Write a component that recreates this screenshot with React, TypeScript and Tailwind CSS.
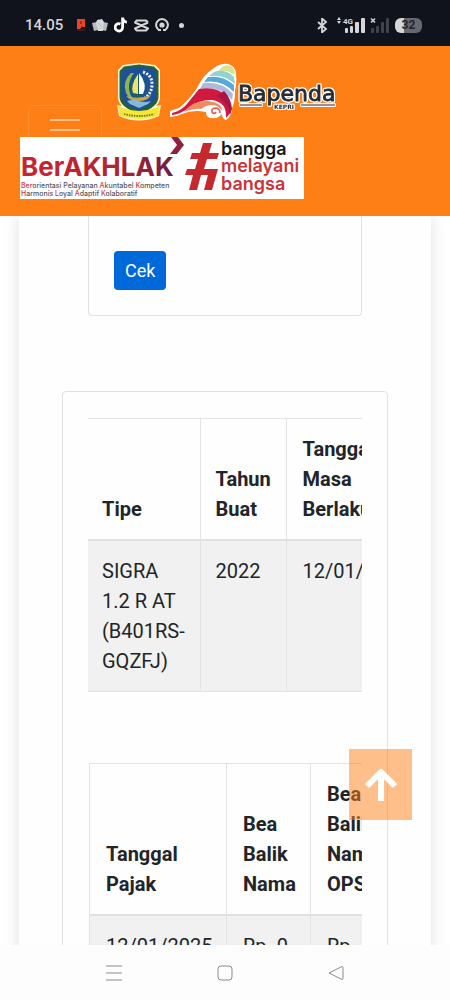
import React from "react";

const vehicle = { tipe: "SIGRA 1.2 R AT (B401RS-GQZFJ)", tahun: "2022", berlaku: "12/01/2027" };

const taxes = [{ tanggal: "12/01/2025", bbn: "Rp. 0", opsen: "Rp. 0" }];

function StatusBar() {
  return (
    <div className="flex h-[46px] shrink-0 items-center justify-between bg-[#11131c] pt-1 pr-7 pl-[25px] text-[#d5d6da]">
      <div className="flex items-center gap-[6px]">
        <span className="mr-[7px] text-[15px] font-medium">14.05</span>
        <svg width="10" height="14" viewBox="0 0 10 14">
          <path d="M1 1h8v8H6l-2 2H1z" fill="#e8432b" />
          <path d="M4 3h2v3H4zM5 8h2v1H5z" fill="#a52c1d" />
          <path d="M1 12h8" stroke="#7c2017" />
        </svg>
        <svg width="16" height="14" viewBox="0 0 16 14">
          <path d="M0 5l5-1 1 8-4 1zM16 5l-5-1-1 8 4 1z" fill="#b9babf" />
          <path d="M5 2l5-1 2 3-1 9H6L4 5z" fill="#d5d6da" />
          <path d="M6 5l4 4" stroke="#b9babf" />
        </svg>
        <svg width="14" height="16" viewBox="0 0 13 15" fill="none" stroke="#fff" strokeWidth="2.6">
          <path d="M6 6.500a3.500 3.500 0 1 0 2 3.500V0.500c.2 2.500 1.800 4 4 4.200" />
        </svg>
        <svg width="15" height="13" viewBox="0 0 15 13" fill="none" stroke="#d5d6da" strokeWidth="2">
          <path d="M14 3.500L12 1.500H2.500L1 3.500l13 6-2 2H2.500L1 9.500l13-6" strokeLinejoin="round" />
        </svg>
        <svg width="14" height="14" viewBox="0 0 14 14" fill="none" stroke="#d5d6da" strokeWidth="2">
          <path d="M4.500 12.300a5.900 5.900 0 1 1 5 0" />
          <circle cx="7" cy="7" r="1.600" fill="#d5d6da" />
          <path d="M3 12h3M8 12h3" />
        </svg>
        <span className="ml-1 size-[5px] rounded-full bg-[#d5d6da]" />
      </div>
      <div className="flex items-center gap-[5px]">
        <svg width="11" height="15" viewBox="0 0 11 15" fill="none" stroke="#d5d6da" strokeWidth="1.800">
          <path d="M1 4l8 7-4 3.500V.5L9 4l-8 7" />
        </svg>
        <svg className="ml-1" width="28" height="16" viewBox="0 0 28 16" fill="#d5d6da">
          <path d="M0 3l2-3 2 3zM0 4h4L2 7z" />
          <text x="6" y="7" fontSize="8" fontWeight="700">4G</text>
          <rect x="8" y="11" width="3" height="5" rx="1" />
          <rect x="13" y="9" width="3" height="7" rx="1" />
          <rect x="18" y="5" width="4" height="11" rx="1" />
          <rect x="24" y="1" width="4" height="15" rx="1" />
        </svg>
        <svg width="20" height="16" viewBox="0 0 20 16" fill="#41434b">
          <path d="M1 1.500l4 4M5 1.500l-4 4" stroke="#d5d6da" strokeWidth="1.500" />
          <rect x="1" y="11" width="3" height="5" rx="1" />
          <rect x="6" y="9" width="3" height="7" rx="1" />
          <rect x="11" y="5" width="3" height="11" rx="1" />
          <rect x="16" y="1" width="3" height="15" rx="1" />
        </svg>
        <div className="flex h-[15px] w-[27px] items-center justify-center rounded-md bg-linear-to-r from-[#d5d6da] from-35% to-[#67686f] to-35% text-xs font-bold text-[#24262e]">
          32
        </div>
      </div>
    </div>
  );
}

function Emblem() {
  return (
    <svg width="46" height="58" viewBox="0 0 46 58" role="img" aria-label="Provinsi Kepulauan Riau">
      <path d="M23 0L7 2 2 7v27q0 5 4 9l-5-1 2 11q20 9 40 0l2-11-5 1q4-4 4-9V7l-5-5z" fill="#fff7d6" />
      <path d="M23 1.500L8 3.500 3.500 8v26q0 10 19.500 17Q42.500 44 42.500 34V8L38 3.500z" fill="#24613f" />
      <path d="M23 4L9 6 6 10v23q1 8 17 14 16-6 17-14V10l-3-4z" fill="#1d4f9b" />
      <path d="M15 10q-9 8-5 20 4 8 11 9-9-6-8-17 1-7 5-12z" fill="#8fb646" />
      <path d="M27 9q9 3 9 12t-7 14" fill="none" stroke="#f3f1e4" strokeWidth="3" strokeDasharray="2 1.500" />
      <ellipse cx="22" cy="23" rx="8" ry="12" fill="#155c77" />
      <path d="M22 11q-8 12-5 19l5 1z" fill="#f0e36a" />
      <path d="M23 10q9 11 4 21h-4z" fill="#fff" />
      <path d="M10 33q12 4 25-1-3 6-12 6t-13-5z" fill="#c9a645" />
      <path d="M11 38q6-2 12 0t12 0l-3 3-9 4-9-4z" fill="#84b9de" />
      <path d="M2 43l5 2q16 6 32 0l5-2-2 10q-19 6-38 0z" fill="#f6e736" />
      <path d="M8 51q15 4 30 0" fill="none" stroke="#6b762c" strokeWidth="1.800" strokeDasharray="1.500 1" />
    </svg>
  );
}

function BapendaLogo() {
  return (
    <svg width="170" height="58" viewBox="0 0 170 58">
      <path
        d="M1 54v-6l9-3Q20 37 28 25 34 12 45 5 52 0 59 1q7 2 8 9 1 10-1 18 0 12-3 17 0 8-6 12-4-1-4-6-4 5-10 4-6 0-6-6-13-3-24 2-6 3-12 3z"
        fill="#fff"
      />
      <path d="M52 5q5-5 11-1 4 4 2 8-6-6-16-3z" fill="#d8e38d" />
      <path d="M45 9q11-4 20 5l1 7Q55 11 40 13z" fill="#93d2cd" />
      <path d="M39 14q15-2 26 8v7Q53 16 35 19z" fill="#55a9dc" />
      <path d="M34 20q19-2 30 11l-1 6Q51 22 31 26z" fill="#adb9df" />
      <path d="M30 26q17-3 26 6 6 7 6 17l-5 6q1-16-14-18-11-1-22 7Q12 51 3 52v-2q9-2 15-9z" fill="#d1193f" />
      <path d="M15 49q9-12 24-11 14 2 14 9l-5-4q-8-3-16 3-6-1-17 3z" fill="#f28a60" />
      <path d="M55 28q7 7 8 18l-2 6Q59 39 48 33z" fill="#a71746" />
      <path d="M51 50q0-5-5-5-4 1-3 4 2 3 4 0" fill="none" stroke="#e55b47" strokeWidth="1.600" />
      <g
        className="[filter:drop-shadow(1px_0_0_#fff)_drop-shadow(-1px_0_0_#fff)_drop-shadow(0_1px_0_#fff)_drop-shadow(0_-1px_0_#fff)]"
        fill="#292a33"
      >
        <text x="69" y="38" fontSize="22" fontFamily="DejaVu Sans" stroke="#292a33" strokeWidth=".8">Bapenda</text>
        <path d="M71 42h22M132 42h34" stroke="#292a33" />
        <text x="105" y="46" fontSize="6" fontWeight="700" fontFamily="DejaVu Sans">KEPRI</text>
      </g>
    </svg>
  );
}

function AkhlakBanner() {
  return (
    <svg className="bg-white" width="284" height="62" viewBox="0 0 284 62" fontFamily="Inter, sans-serif">
      <defs>
        <linearGradient id="akhlak">
          <stop offset="0" stopColor="#c9252d" />
          <stop offset=".6" stopColor="#b5252f" />
          <stop offset="1" stopColor="#6e1d43" />
        </linearGradient>
      </defs>
      <text x="1" y="39" fontSize="26" fontWeight="700" fill="url(#akhlak)">BerAKHLAK</text>
      <path d="M151 0h7l6 8-7 9h-7l7-9z" fill="#8f2140" />
      <g fontSize="7" fontWeight="500" fill="#55565c">
        <text x="1" y="51">
          <tspan fill="#d8353b">Ber</tspan>orientasi Pelayanan <tspan fill="#d8353b">A</tspan>kuntabel <tspan fill="#d8353b">K</tspan>ompeten
        </text>
        <text x="1" y="59">
          <tspan fill="#d8353b">H</tspan>armonis <tspan fill="#d8353b">L</tspan>oyal <tspan fill="#d8353b">A</tspan>daptif <tspan fill="#d8353b">K</tspan>olaboratif
        </text>
      </g>
      <path
        d="M183 6h9l-3 10h10l-2 6h-10l-3 10h14l-6 21h-8l4-15h-7l-4 15h-8l4-15h-8l2-6h8l3-10h-8l2-6h8z"
        fill="#c5292e"
      />
      <g fontSize="19" fontWeight="600" fill="#c9343a">
        <text x="201" y="18" fontSize="18" fill="#17171b">bangga</text>
        <text x="201" y="35" fontSize="18">melayani</text>
        <text x="201" y="53" fontSize="18">bangsa</text>
      </g>
    </svg>
  );
}

function Header() {
  return (
    <header className="relative h-[170px] shrink-0 bg-[#ff7f17] pt-[17px]">
      <a href="#" className="flex justify-center gap-[7px] pl-1">
        <Emblem />
        <BapendaLogo />
      </a>
      <button
        aria-label="Menu"
        className="-mt-4 ml-7 flex h-14 w-[74px] flex-col items-center gap-2 rounded-md border border-[#ff8b2e] pt-[13px]"
      >
        <span className="h-[2px] w-[30px] bg-[#ffc08a]" />
        <span className="h-[2px] w-[30px] bg-[#ffc08a]" />
        <span className="h-[2px] w-[30px] bg-[#ffc08a]" />
      </button>
      <div className="absolute top-[91px] left-5">
        <AkhlakBanner />
      </div>
    </header>
  );
}

function VehicleTable() {
  return (
    <div className="overflow-x-auto [scrollbar-width:none]">
      <table className="w-[345px] table-fixed border-collapse border-y border-[#e2e3e5]">
        <thead>
          <tr className="border-b-2 border-[#dee0e2] text-left align-bottom">
            <th className="w-28 border-r border-[#e2e3e5] py-[15px] pr-3 pl-[14px]">Tipe</th>
            <th className="w-[86px] border-r border-[#e2e3e5] py-[15px] pl-[15px]">Tahun Buat</th>
            <th className="py-[15px] pl-4">Tanggal<br />Masa<br />Berlaku</th>
          </tr>
        </thead>
        <tbody>
          <tr className="bg-[#f1f1f1] align-top">
            <td className="border-r border-[#e2e3e5] py-[15px] pr-3 pl-[14px]">{vehicle.tipe}</td>
            <td className="border-r border-[#e2e3e5] py-[15px] pl-[15px]">{vehicle.tahun}</td>
            <td className="py-[15px] pl-4">{vehicle.berlaku}</td>
          </tr>
        </tbody>
      </table>
    </div>
  );
}

function TaxTable() {
  return (
    <div className="mt-[71px] overflow-x-auto pl-px [scrollbar-width:none]">
      <table className="w-[330px] table-fixed border-collapse border border-[#e2e3e5]">
        <thead>
          <tr className="border-b-2 border-[#dee0e2] text-left align-bottom">
            <th className="w-[137px] border-r border-[#e2e3e5] py-[15px] pr-6 pl-4">Tanggal Pajak</th>
            <th className="w-[84px] border-r border-[#e2e3e5] py-[15px] pl-4">Bea Balik Nama</th>
            <th className="py-[15px] pl-4">Bea<br />Balik<br />Nama<br />OPSEN</th>
          </tr>
        </thead>
        <tbody>
          {taxes.map((tax) => (
            <tr className="bg-[#f1f1f1] align-top" key={tax.tanggal}>
              <td className="border-r border-[#e2e3e5] py-[15px] pl-4">{tax.tanggal}</td>
              <td className="border-r border-[#e2e3e5] py-[15px] pl-4">{tax.bbn}</td>
              <td className="py-[15px] pr-14 pl-4">{tax.opsen}</td>
            </tr>
          ))}
        </tbody>
      </table>
    </div>
  );
}

function SystemNav() {
  return (
    <nav className="flex h-[55px] shrink-0 items-center justify-center gap-[95px] bg-[#fdfdfd] text-[#8b8b8b]">
      <button aria-label="Recent apps">
        <svg width="16" height="16" viewBox="0 0 16 16" stroke="currentColor">
          <path d="M0 1h16M0 8h16M0 15h16" />
        </svg>
      </button>
      <button aria-label="Home">
        <svg width="16" height="16" viewBox="0 0 16 16" fill="none" stroke="currentColor">
          <rect x="1" y="1" width="14" height="14" rx="3" />
        </svg>
      </button>
      <button aria-label="Back">
        <svg width="16" height="16" viewBox="0 0 16 16" fill="none" stroke="currentColor">
          <path d="M1 8L14 1.500q1 0 1 1v11q0 1-1 1z" strokeLinejoin="round" />
        </svg>
      </button>
    </nav>
  );
}

export default function App() {
  return (
    <div className="flex h-screen flex-col overflow-hidden bg-white font-['Roboto',sans-serif] text-[#212529]">
      <StatusBar />
      <Header />

      <main className="relative min-h-0 flex-1 overflow-hidden">
        <div className="mx-[19px] min-h-full bg-[#fefefe] px-[43px] shadow-[0_0_16px_rgba(0,0,0,0.12)]">
          <div className="mx-[26px] rounded-b border-x border-b border-[#e0e1e2] px-[25px] pt-[35px] pb-[25px]">
            <button className="block h-[39px] rounded bg-[#0069d9] px-[11px] text-lg text-white">Cek</button>
          </div>

          <div className="mt-[75px] rounded border border-[#e0e1e2] px-[25px] py-[26px] text-xl leading-[30px]">
            <VehicleTable />
            <TaxTable />
          </div>
        </div>

        <a
          href="#"
          aria-label="Back to top"
          className="absolute right-[38px] bottom-[125px] flex h-[71px] w-[63px] items-center justify-center bg-[#ff7f17]/50"
        >
          <svg width="34" height="34" viewBox="0 0 34 34" fill="none" stroke="#fff" strokeWidth="6">
            <path d="M17 33V4M3 18L17 4l14 14" strokeLinejoin="round" />
          </svg>
        </a>
      </main>

      <SystemNav />
    </div>
  );
}
